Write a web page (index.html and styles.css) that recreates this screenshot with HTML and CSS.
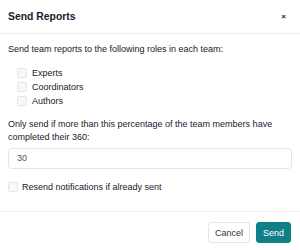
FILE: index.html
```html
<!DOCTYPE html>
<html>
<head>
<meta charset="utf-8">
<link rel="stylesheet" href="styles.css">
</head>
<body>
<div class="modal">
  <div class="header">
    <div class="title">Send Reports</div>
    <div class="close">&times;</div>
  </div>
  <div class="content">
    <p class="intro">Send team reports to the following roles in each team:</p>
    <div class="roles">
      <label class="row"><span class="box"></span>Experts</label>
      <label class="row"><span class="box"></span>Coordinators</label>
      <label class="row"><span class="box"></span>Authors</label>
    </div>
    <p class="para">Only send if more than this percentage of the team members have completed their 360:</p>
    <div class="input">30</div>
    <label class="row resend"><span class="box"></span>Resend notifications if already sent</label>
  </div>
  <div class="footer">
    <button class="btn cancel">Cancel</button>
    <button class="btn send">Send</button>
  </div>
</div>
</body>
</html>
```
FILE: styles.css
```css
html, body {
  margin: 0;
  padding: 0;
  background: #fff;
}
body {
  font-family: "Liberation Sans", Arial, sans-serif;
  color: #1a202c;
}
.modal {
  width: 300px;
  height: 250px;
  display: flex;
  flex-direction: column;
  box-sizing: border-box;
}
.header {
  height: 33px;
  display: flex;
  align-items: center;
  justify-content: space-between;
  padding: 0 14px 0 8px;
  border-bottom: 1px solid #eceef4;
  flex: none;
}
.title {
  font-size: 10.4px;
  font-weight: bold;
  padding-bottom: 1px;
}
.close {
  font-size: 8px;
  font-weight: bold;
  color: #222;
  line-height: 1;
}
.content {
  flex: 1;
  padding: 9px 8px 0 8px;
  font-size: 9px;
}
.intro {
  margin: 0;
  line-height: 13px;
}
.roles {
  margin-top: 10px;
  padding-left: 9px;
}
.row {
  display: flex;
  align-items: center;
  height: 14px;
  line-height: 14px;
}
.box {
  width: 8px;
  height: 8px;
  border: 1px solid #e3e6ee;
  background: #f7f8fb;
  border-radius: 2px;
  margin-right: 5px;
  flex: none;
}
.para {
  margin: 10px 0 0 0;
  line-height: 13px;
}
.input {
  margin-top: 4px;
  height: 19px;
  border: 1px solid #e2e5ee;
  border-radius: 4px;
  padding-left: 8px;
  line-height: 19px;
  color: #4a5568;
  font-size: 9px;
}
.resend {
  margin-top: 11px;
}
.resend .box {
  margin-right: 4px;
}
.footer {
  height: 28px;
  flex: none;
  border-top: 1px solid #eceef4;
  display: flex;
  justify-content: flex-end;
  align-items: flex-start;
  padding: 10px 9px 0 0;
  gap: 6px;
}
.btn {
  font-family: "Liberation Sans", Arial, sans-serif;
  font-size: 9px;
  height: 21px;
  border-radius: 3px;
  padding: 0;
  cursor: pointer;
}
.cancel {
  width: 42px;
  background: #fff;
  border: 1px solid #e2e5ee;
  color: #2d3748;
}
.send {
  width: 35px;
  background: #0f7f88;
  border: 1px solid #0f7f88;
  color: #fff;
}
```
